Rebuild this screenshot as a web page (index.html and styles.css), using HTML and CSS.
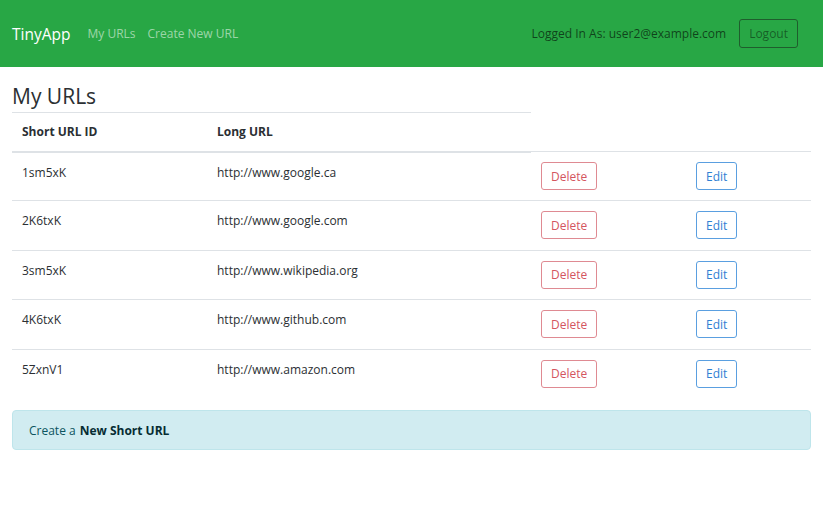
FILE: index.html
```html
<!DOCTYPE html>
<html>
<head>
<meta charset="utf-8">
<link rel="stylesheet" href="styles.css">
</head>
<body>
<nav class="navbar">
  <div class="nav-left">
    <a class="brand" href="#">TinyApp</a>
    <a class="nav-link" href="#">My URLs</a>
    <a class="nav-link" href="#">Create New URL</a>
  </div>
  <div class="nav-right">
    <span class="logged">Logged In As: user2@example.com</span>
    <button class="btn-logout">Logout</button>
  </div>
</nav>
<main class="content">
  <h1 class="title">My URLs</h1>
  <table class="urls">
    <thead>
      <tr><th class="c1">Short URL ID</th><th class="c2">Long URL</th></tr>
    </thead>
    <tbody>
      <tr><td>1sm5xK</td><td>http://www.google.ca</td><td><button class="btn btn-del">Delete</button></td><td><button class="btn btn-edit">Edit</button></td></tr>
      <tr><td>2K6txK</td><td>http://www.google.com</td><td><button class="btn btn-del">Delete</button></td><td><button class="btn btn-edit">Edit</button></td></tr>
      <tr><td>3sm5xK</td><td>http://www.wikipedia.org</td><td><button class="btn btn-del">Delete</button></td><td><button class="btn btn-edit">Edit</button></td></tr>
      <tr><td>4K6txK</td><td>http://www.github.com</td><td><button class="btn btn-del">Delete</button></td><td><button class="btn btn-edit">Edit</button></td></tr>
      <tr><td>5ZxnV1</td><td>http://www.amazon.com</td><td><button class="btn btn-del">Delete</button></td><td><button class="btn btn-edit">Edit</button></td></tr>
    </tbody>
  </table>
  <div class="alert">Create a <a href="#">New Short URL</a></div>
</main>
</body>
</html>
```

FILE: styles.css
```css
* { box-sizing: border-box; }
body {
  margin: 0;
  font-family: "Open Sans", "Noto Sans", sans-serif;
  font-size: 12px;
  color: #2b2f33;
  background: #fff;
}
.navbar {
  background: #28a745;
  height: 67px;
  display: flex;
  align-items: center;
  justify-content: space-between;
  padding: 0 25px 0 12px;
}
.nav-left, .nav-right { display: flex; align-items: center; }
.brand {
  color: #fff;
  text-decoration: none;
  font-size: 15.5px;
  margin-right: 17px;
}
.nav-link {
  color: rgba(255,255,255,0.55);
  text-decoration: none;
  font-size: 12px;
  margin-right: 12px;
}
.logged {
  color: rgba(0,0,0,0.62);
  font-size: 12px;
  margin-right: 13px;
}
.btn-logout {
  font-family: inherit;
  font-size: 12px;
  background: transparent;
  border: 1px solid #1f5e2d;
  color: rgba(0,0,0,0.45);
  border-radius: 3px;
  height: 29px;
  padding: 0 9px;
}
.content { padding: 0 12px; }
.title {
  margin: 16px 0 3px;
  font-size: 21px;
  font-weight: 500;
  line-height: 26px;
}
.urls {
  width: 100%;
  border-collapse: collapse;
}
.urls th {
  text-align: left;
  font-weight: 700;
  padding: 10px 10px;
  height: 39px;
  border-top: 1px solid #dee2e6;
  border-bottom: 2px solid #dee2e6;
}
.urls th.c1 { width: 195px; }
.urls th.c2 { width: 324px; }
.urls td {
  vertical-align: top;
  padding: 10px 10px;
  line-height: 19px;
  border-top: 1px solid #dee2e6;
  height: 49.4px;
}
.urls td:nth-child(3) { width: 155px; }
.btn {
  font-family: inherit;
  font-size: 12px;
  background: #fff;
  border-radius: 3px;
  height: 28px;
  padding: 0 9px;
}
.btn-del { color: #d4555f; border: 1px solid #df8a92; }
.btn-edit { color: #2f80d3; border: 1px solid #5a9fe0; }
.alert {
  margin-top: 12px;
  background: #d1ecf1;
  border: 1px solid #bee5eb;
  color: #0c5460;
  border-radius: 4px;
  height: 40px;
  display: flex;
  align-items: center;
  padding: 0 16px;
}
.alert a {
  color: #062c33;
  font-weight: 700;
  text-decoration: none;
  margin-left: 4px;
}
```
